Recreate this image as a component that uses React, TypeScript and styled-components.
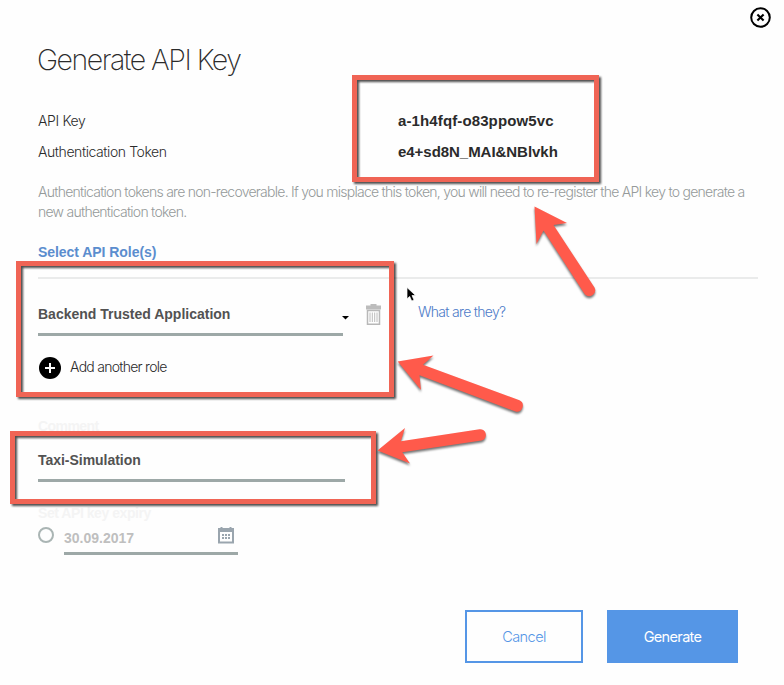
import React from 'react';
import styled, { createGlobalStyle } from 'styled-components';

const Global = createGlobalStyle`
  *, *::before, *::after { box-sizing: border-box; }
  html, body { margin: 0; background: #fefefe; }
  body { overflow: hidden; }
`;

const light = '"Inter", "Liberation Sans", sans-serif';
const bold = '"Liberation Sans", Arial, sans-serif';

const Dialog = styled.main`
  position: relative;
  width: 784px;
  height: 685px;
  padding: 38px 26px 0 38px;
  background: #fefefe;
  color: #2b2b2b;
  font: 300 14px/20px ${light};
  overflow: hidden;
`;

const CloseButton = styled.button`
  position: absolute;
  top: 6px;
  right: 12px;
  width: 23px;
  height: 23px;
  padding: 0;
  border: 0;
  background: none;
  svg { display: block; }
`;

const Title = styled.h1`
  margin: 0 0 23px -1px;
  font: 200 28.5px/44px ${light};
  letter-spacing: -1.5px;
  white-space: nowrap;
`;

const Tracked = styled.span<{ $track: number }>`
  letter-spacing: ${p => p.$track}px;
  white-space: nowrap;
`;

const Credential = styled.div`
  display: grid;
  grid-template-columns: 360px 1fr;
  height: 31px;
  line-height: 31px;
`;

const Secret = styled.strong<{ $track: number }>`
  font: 700 15px/31px ${bold};
  letter-spacing: ${p => p.$track}px;
`;

const Hint = styled.p`
  margin: 15px 0 20px;
  color: #959a9a;
  line-height: 20px;
`;

const HintLine = styled(Tracked)`
  display: block;
`;

const SectionTitle = styled.h2`
  margin: 0;
  padding-bottom: 15px;
  border-bottom: 2px solid #eaebeb;
  color: #5b8dce;
  font: 700 14px/20px ${bold};
  letter-spacing: -0.05px;
`;

const RoleRow = styled.div`
  display: flex;
  height: 37px;
  margin-top: 20px;
`;

const Field = styled.div<{ $width: number; $line?: number; $pad?: number; $muted?: boolean }>`
  display: flex;
  justify-content: space-between;
  width: ${p => p.$width}px;
  padding-bottom: ${p => p.$pad ?? 4}px;
  border-bottom: 3px solid #9da8a7;
  color: ${p => (p.$muted ? '#bfbfbf' : '#525252')};
  font: 700 14px/${p => p.$line ?? 30}px ${bold};
`;

const Caret = styled.svg`
  margin: 17px -6px 0 0;
  overflow: visible;
`;

const Trash = styled.svg`
  margin: 5px 37px 0 23px;
`;

const Link = styled.a`
  color: #4d7bc8;
  line-height: 26px;
`;

const AddRole = styled.div`
  display: flex;
  align-items: center;
  gap: 8px;
  height: 24px;
  margin-top: 20px;
  line-height: 22px;
`;

const AddRoleText = styled(Tracked)`
  padding-bottom: 2px;
`;

const FaintLabel = styled.label<{ $top: number; $track: number }>`
  display: block;
  margin-top: ${p => p.$top}px;
  color: #f4f4f4;
  font: 700 14px/20px ${bold};
  letter-spacing: ${p => p.$track}px;
`;

const CommentField = styled(Field)`
  margin-top: 9px;
`;

const ExpiryRow = styled.div`
  display: flex;
  gap: 10px;
  margin-top: 1px;
`;

const Radio = styled.span`
  width: 16px;
  height: 16px;
  margin-top: 3px;
  border: 2px solid #aab5b4;
  border-radius: 50%;
`;

const Calendar = styled.svg`
  margin: 3px 4px 0 0;
`;

const Actions = styled.footer`
  display: flex;
  justify-content: flex-end;
  gap: 24px;
  margin: 55px 20px 0 0;
`;

const Button = styled.button<{ $primary?: boolean }>`
  width: ${p => (p.$primary ? 131 : 118)}px;
  height: 53px;
  padding: 0;
  border: 2px solid #5596e6;
  background: ${p => (p.$primary ? '#5596e6' : '#fefefe')};
  color: ${p => (p.$primary ? '#fff' : '#5596e6')};
  font: ${p => (p.$primary ? 400 : 300)} 14.5px/20px ${light};
`;

const Highlight = styled.div<{ $x: number; $y: number; $w: number; $h: number }>`
  position: absolute;
  left: ${p => p.$x}px;
  top: ${p => p.$y}px;
  width: ${p => p.$w}px;
  height: ${p => p.$h}px;
  border: 5px solid #f06455;
  filter: drop-shadow(2.5px 2.5px 1px rgba(0, 0, 0, 0.7));
  pointer-events: none;
`;

const Markers = styled.svg`
  position: absolute;
  inset: 0;
  pointer-events: none;
  g { filter: drop-shadow(0 2px 1px rgba(0, 0, 0, 0.55)); }
`;

const calendarDots = [0, 1, 2].flatMap(c => [0, 1].map(r => ({ x: 4 + c * 3, y: 7 + r * 3 })));

export default function App() {
  return (
    <>
      <Global />
      <Dialog>
        <CloseButton aria-label="Close">
          <svg width="23" height="23" viewBox="0 0 23 23" fill="none" stroke="#000">
            <circle cx="11.5" cy="11.5" r="9.3" strokeWidth="2" />
            <path d="M8.4 8.4l6.2 6.2M14.6 8.4l-6.2 6.2" strokeWidth="2.1" />
          </svg>
        </CloseButton>

        <Title>Generate API Key</Title>

        <Credential>
          <Tracked $track={-0.35}>API Key</Tracked>
          <Secret $track={0.12}>a-1h4fqf-o83ppow5vc</Secret>
        </Credential>
        <Credential>
          <Tracked $track={-0.42}>Authentication Token</Tracked>
          <Secret $track={-0.04}>e4+sd8N_MAI&amp;NBlvkh</Secret>
        </Credential>

        <Hint>
          <HintLine $track={-0.74}>
            Authentication tokens are non-recoverable. If you misplace this token, you will need to re-register the API key to generate a
          </HintLine>
          <HintLine $track={-0.74}>new authentication token.</HintLine>
        </Hint>

        <SectionTitle>Select API Role(s)</SectionTitle>

        <RoleRow>
          <Field $width={305}>
            <Tracked $track={0}>Backend Trusted Application</Tracked>
            <Caret width="7" height="4"><path d="M0 0h7L3.5 3.6z" fill="#000" /></Caret>
          </Field>
          <Trash width="15" height="21" viewBox="0 0 15 21">
            <path d="M4.5 0h6v1.5H15v4H0v-4h4.5z" fill="#bcbcbc" />
            <path d="M1.5 6.5h12v13.7h-12z" fill="#fff" stroke="#b8b8b8" strokeWidth="1.5" />
            <path d="M4 8.5v9.5M6.3 8.5v9.5M8.7 8.5v9.5M11 8.5v9.5" stroke="#bcbcbc" />
          </Trash>
          <Link><Tracked $track={-0.7}>What are they?</Tracked></Link>
        </RoleRow>

        <AddRole>
          <svg width="24" height="24" viewBox="0 0 24 24">
            <circle cx="12" cy="12" r="11" fill="#000" />
            <path d="M12 7v10M7 12h10" stroke="#fff" strokeWidth="2" />
          </svg>
          <AddRoleText $track={-0.73}>Add another role</AddRoleText>
        </AddRole>

        <FaintLabel $top={36} $track={-0.55}>Comment</FaintLabel>
        <CommentField $width={307}>
          <Tracked $track={-0.03}>Taxi-Simulation</Tracked>
        </CommentField>

        <FaintLabel $top={21} $track={-0.45}>Set API key expiry</FaintLabel>
        <ExpiryRow>
          <Radio />
          <Field $width={174} $line={28} $pad={0} $muted>
            <Tracked $track={0}>30.09.2017</Tracked>
            <Calendar width="16" height="17" viewBox="0 0 16 17">
              <path d="M0 1h2.5V0h2v1h7V0h2v1H16v15.5H0zM2 5v9.5h12V5z" fill="#9aa5ae" fillRule="evenodd" />
              {calendarDots.map(d => (
                <rect key={`${d.x}-${d.y}`} x={d.x} y={d.y} width="2" height="2" fill="#9aa5ae" />
              ))}
            </Calendar>
          </Field>
        </ExpiryRow>

        <Actions>
          <Button><Tracked $track={-0.55}>Cancel</Tracked></Button>
          <Button $primary><Tracked $track={-0.65}>Generate</Tracked></Button>
        </Actions>

        <Highlight $x={352} $y={75} $w={247} $h={107} />
        <Highlight $x={16} $y={261} $w={378} $h={136} />
        <Highlight $x={10} $y={431} $w={366} $h={73} />

        <Markers width="784" height="685" viewBox="0 0 784 685">
          <g fill="#ff5a4b">
            <path d="M534.5 206.5L567 223 553.5 225 594.5 287.5A6 6 0 0 1 585 294.5L543.5 230.5 536.5 244z" />
            <path d="M397.7 361.5L433.5 355.5 423 364.8 519.5 400.3A6 6 0 0 1 515.5 411.5L419.5 375.3 421 390z" />
            <path d="M377.5 450.5L405 428 400.8 441.3 479.5 429.2A5.8 5.8 0 0 1 481.5 440.6L402.3 452.2 410 463.5z" />
          </g>
          <path d="M407 287.5v11.3l2.7-2.4 2 4.6 2.3-1-2-4.5h3.6z" fill="#000" stroke="#fff" strokeWidth=".7" />
        </Markers>
      </Dialog>
    </>
  );
}
